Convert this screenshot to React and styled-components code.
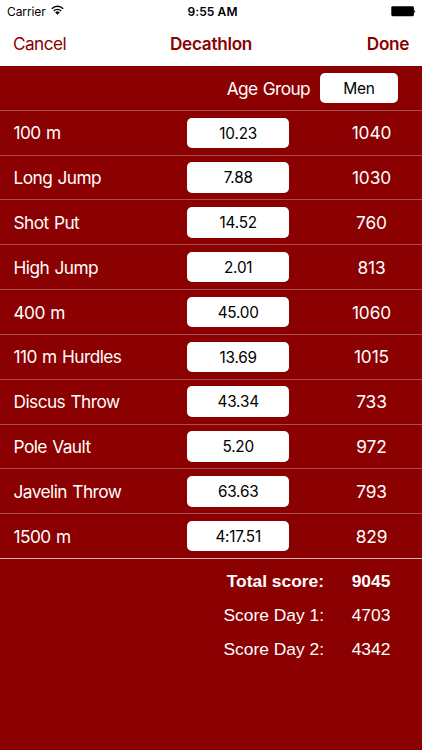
import styled, { createGlobalStyle } from "styled-components";

const EVENTS = [
  { name: "100 m", result: "10.23", points: 1040 },
  { name: "Long Jump", result: "7.88", points: 1030 },
  { name: "Shot Put", result: "14.52", points: 760 },
  { name: "High Jump", result: "2.01", points: 813 },
  { name: "400 m", result: "45.00", points: 1060 },
  { name: "110 m Hurdles", result: "13.69", points: 1015 },
  { name: "Discus Throw", result: "43.34", points: 733 },
  { name: "Pole Vault", result: "5.20", points: 972 },
  { name: "Javelin Throw", result: "63.63", points: 793 },
  { name: "1500 m", result: "4:17.51", points: 829 },
];

const WifiIcon = () => (
  <svg width="13" height="10" viewBox="0 0 13 10" fill="none" stroke="#000">
    <path d="M0.8 3.7a8.1 8.1 0 0 1 11.4 0" strokeWidth="1.5" />
    <path d="M2.8 5.9a5.2 5.2 0 0 1 7.4 0" strokeWidth="1.4" />
    <path d="M6.5 9.7L4.2 7.4a3.3 3.3 0 0 1 4.6 0z" fill="#000" stroke="none" />
  </svg>
);

const BatteryIcon = () => (
  <svg width="26" height="11" viewBox="0 0 26 11">
    <rect x="1.3" y="0.2" width="22.6" height="10" rx="1.4" fill="#000" />
    <path d="M24.3 3.8c1.2.2 1.2 3 0 3.2z" fill="#000" />
  </svg>
);

const App = () => {
  return (
    <Screen>
      <GlobalStyle />
      <StatusBar>
        <Carrier>
          Carrier
          <WifiIcon />
        </Carrier>
        <Clock>9:55 AM</Clock>
        <Battery>
          <BatteryIcon />
        </Battery>
      </StatusBar>
      <NavBar>
        <NavButton>Cancel</NavButton>
        <Title>Decathlon</Title>
        <NavButton $strong>Done</NavButton>
      </NavBar>
      <GroupRow>
        <GroupLabel>Age Group</GroupLabel>
        <GroupValue>Men</GroupValue>
      </GroupRow>
      {EVENTS.map(({ name, result, points }) => (
        <EventRow key={name}>
          <EventName>{name}</EventName>
          <Result>{result}</Result>
          <Points>{points}</Points>
        </EventRow>
      ))}
      <Totals>
        <TotalRow $strong>
          <span>Total score:</span>
          <TotalValue>9045</TotalValue>
        </TotalRow>
        <TotalRow>
          <span>Score Day 1:</span>
          <TotalValue>4703</TotalValue>
        </TotalRow>
        <TotalRow>
          <span>Score Day 2:</span>
          <TotalValue>4342</TotalValue>
        </TotalRow>
      </Totals>
    </Screen>
  );
};

export default App;

const GlobalStyle = createGlobalStyle`
  * {
    box-sizing: border-box;
  }
  body {
    margin: 0;
    background-color: #8b0000;
  }
  button {
    margin: 0;
    padding: 0;
    border: 0;
    background: none;
    font-family: inherit;
  }
`
const Screen = styled.main`
  width: 422px;
  height: 750px;
  overflow: hidden;
  background-color: #8b0000;
  color: #fff;
  font-family: Inter, "Liberation Sans", sans-serif;
  white-space: nowrap;
`
const StatusBar = styled.div`
  display: grid;
  grid-template-columns: 1fr auto 1fr;
  align-items: center;
  height: 22px;
  padding: 0 6px 0 7px;
  background-color: #fff;
  color: #000;
  font-size: 12px;
`
const Carrier = styled.div`
  display: flex;
  align-items: center;
  gap: 5px;
  letter-spacing: -0.1px;
  svg{
    margin-top: -2px;
  }
`
const Clock = styled.div`
  padding-left: 2px;
  font-weight: 600;
  letter-spacing: 0.1px;
`
const Battery = styled.div`
  display: flex;
  justify-content: flex-end;
`
const NavBar = styled.header`
  display: grid;
  grid-template-columns: 1fr auto 1fr;
  align-items: center;
  height: 43.5px;
  padding: 0 13px;
  background-color: #fff;
  color: #8b0000;
`
const NavButton = styled.button`
  justify-self: ${({ $strong }) => ($strong ? 'end' : 'start')};
  color: inherit;
  font-size: 17.2px;
  font-weight: ${({ $strong }) => ($strong ? 600 : 400)};
  letter-spacing: ${({ $strong }) => ($strong ? '-0.35px' : '-0.55px')};
`
const Title = styled.h1`
  margin: 0;
  font-size: 17.2px;
  font-weight: 600;
  letter-spacing: -0.3px;
`
const GroupRow = styled.div`
  display: flex;
  justify-content: flex-end;
  align-items: center;
  gap: 10px;
  height: 44.3px;
  padding-right: 24px;
`
const GroupLabel = styled.span`
  padding-top: 1px;
  font-size: 17.3px;
  letter-spacing: -0.6px;
  word-spacing: 1px;
`
const GroupValue = styled.button`
  width: 78px;
  height: 30px;
  padding-top: 1px;
  border-radius: 5px;
  background-color: #fff;
  color: #000;
  font-size: 15.5px;
  letter-spacing: -0.3px;
`
const EventRow = styled.div`
  display: grid;
  grid-template-columns: 173.9px 101.6px 1fr;
  align-items: center;
  height: 44.84px;
  padding-left: 13.5px;
  border-top: 1px solid #ae4c4c;
`
const EventName = styled.span`
  font-size: 17.3px;
  letter-spacing: -0.55px;
  word-spacing: 1px;
`
const Result = styled.div`
  height: 30.4px;
  padding-top: 1px;
  border-radius: 5px;
  background-color: #fff;
  color: #000;
  font-size: 15.3px;
  letter-spacing: -0.2px;
  line-height: 30px;
  text-align: center;
`
const Points = styled.span`
  width: 165px;
  font-size: 17.3px;
  letter-spacing: -0.1px;
  text-align: center;
`
const Totals = styled.section`
  padding-top: 6px;
  border-top: 1px solid #e0b5b5;
  font-family: "Liberation Sans", Arial, sans-serif;
`
const TotalRow = styled.div`
  display: grid;
  grid-template-columns: 324px 94px;
  align-items: center;
  height: 33.7px;
  font-size: 17.4px;
  font-weight: ${({ $strong }) => ($strong ? 700 : 400)};
  text-align: right;
`
const TotalValue = styled.span`
  text-align: center;
`
